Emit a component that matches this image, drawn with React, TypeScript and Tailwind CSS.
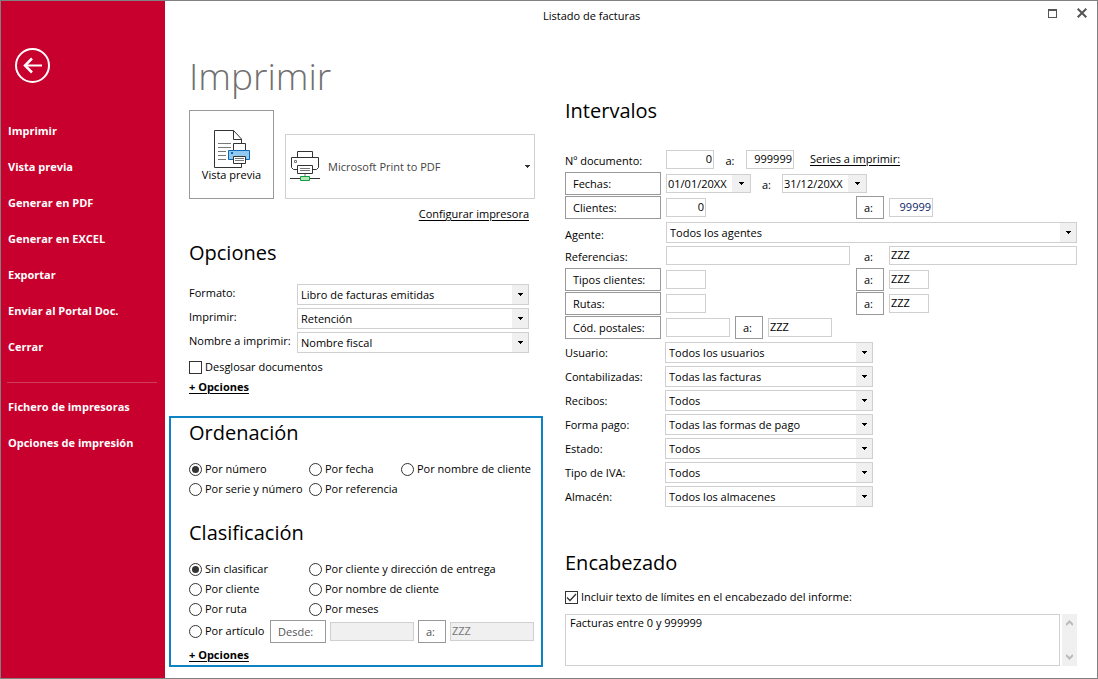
import React, { useState } from 'react';
import clsx from 'clsx';

const mainLinks = [
  'Imprimir',
  'Vista previa',
  'Generar en PDF',
  'Generar en EXCEL',
  'Exportar',
  'Enviar al Portal Doc.',
  'Cerrar',
];

const extraLinks = ['Fichero de impresoras', 'Opciones de impresión'];

const optionSelects = [
  { id: 'formato', label: 'Formato:', value: 'Libro de facturas emitidas' },
  { id: 'imprimir', label: 'Imprimir:', value: 'Retención' },
  { id: 'nombre', label: 'Nombre a imprimir:', value: 'Nombre fiscal' },
];

const filterSelects = [
  { id: 'usuario', label: 'Usuario:', value: 'Todos los usuarios' },
  { id: 'contabilizadas', label: 'Contabilizadas:', value: 'Todas las facturas' },
  { id: 'recibos', label: 'Recibos:', value: 'Todos' },
  { id: 'forma-pago', label: 'Forma pago:', value: 'Todas las formas de pago' },
  { id: 'estado', label: 'Estado:', value: 'Todos' },
  { id: 'tipo-iva', label: 'Tipo de IVA:', value: 'Todos' },
  { id: 'almacen', label: 'Almacén:', value: 'Todos los almacenes' },
];

interface SelectProps {
  id?: string;
  label?: string;
  value: string;
  className?: string;
  compact?: boolean;
}

function Select({ id, label, value, className, compact }: SelectProps) {
  return (
    <div className={clsx('relative border border-[#d0d0d0]', compact ? 'h-[19px]' : 'h-[21px]', className)}>
      <select
        id={id}
        aria-label={label}
        defaultValue={value}
        className={clsx(
          'block h-full w-full appearance-none bg-white leading-4 outline-none',
          compact ? 'pl-px' : 'pl-[3px]'
        )}
      >
        <option>{value}</option>
      </select>
      <span
        className={clsx(
          'pointer-events-none absolute inset-y-0 right-0 flex items-center justify-center bg-[#f0f0f0]',
          compact ? 'w-[18px]' : 'w-4'
        )}
      >
        <svg width="5" height="3" viewBox="0 0 5 3" shapeRendering="crispEdges">
          <path d="M0 0h5v1H4v1H3v1H2V2H1V1H0z" fill="#000" />
        </svg>
      </span>
    </div>
  );
}

interface FieldProps {
  label: string;
  value?: string;
  className?: string;
  alignRight?: boolean;
  disabled?: boolean;
}

function Field({ label, value = '', className, alignRight, disabled }: FieldProps) {
  return (
    <input
      type="text"
      aria-label={label}
      defaultValue={value}
      disabled={disabled}
      className={clsx(
        'mt-0.5 h-[19px] border border-[#d0d0d0] px-px pb-0.5 leading-4 outline-none disabled:bg-[#f0f0f0] disabled:text-[#777]',
        alignRight && 'text-right',
        className
      )}
    />
  );
}

function BoxButton({ children, className }: { children: React.ReactNode; className?: string }) {
  return (
    <button className={clsx('h-[23px] border border-[#999] text-left leading-[21px] hover:bg-gray-100', className)}>
      {children}
    </button>
  );
}

interface RadioProps {
  name: string;
  label: string;
  selected: string;
  onSelect: (value: string) => void;
}

function Radio({ name, label, selected, onSelect }: RadioProps) {
  return (
    <label className="flex h-5 items-center gap-[3px] whitespace-nowrap">
      <span className="relative size-[13px] shrink-0">
        <input
          type="radio"
          name={name}
          checked={selected === label}
          onChange={() => onSelect(label)}
          className="peer block size-[13px] appearance-none rounded-full border border-[#333] bg-white"
        />
        <span className="pointer-events-none absolute inset-[3px] hidden rounded-full bg-[#333] peer-checked:block" />
      </span>
      {label}
    </label>
  );
}

function Checkbox({ label, defaultChecked }: { label: string; defaultChecked?: boolean }) {
  return (
    <label className="flex h-5 items-center gap-[3px] whitespace-nowrap">
      <span className="relative size-[13px] shrink-0">
        <input
          type="checkbox"
          defaultChecked={defaultChecked}
          className="peer block size-[13px] appearance-none border border-[#333] bg-white"
        />
        <svg
          className="pointer-events-none absolute inset-0 hidden peer-checked:block"
          width="13"
          height="13"
          viewBox="0 0 13 13"
          fill="none"
          stroke="#333"
          strokeWidth="1.3"
        >
          <path d="M2 6.5L5 9.500l6-6.500" />
        </svg>
      </span>
      {label}
    </label>
  );
}

function PreviewIcon() {
  return (
    <svg width="36" height="38" viewBox="0 0 36 38" fill="none" stroke="#333">
      <path d="M27.5 33.500v4H.5V.5h19l8 8.500v4" fill="#fff" />
      <path d="M19.500.5v9h8" />
      <path d="M4 13.500h13M4 17.500h13M4 21.500h8M4 25.500h8M4 29.500h8" stroke="#777" />
      <path d="M19.500 20.500v-7h12v7" fill="#fff" />
      <path d="M14.500 20.500h21v9h-21z" fill="#92c9f0" stroke="#1067b5" />
      <path d="M17 23h2" stroke="#1067b5" strokeWidth="2" />
      <path d="M19.500 26.500h12v7h-12z" fill="#fff" />
      <path d="M21 28.500h9M21 30.500h9" stroke="#777" />
    </svg>
  );
}

function NetworkPrinterIcon() {
  return (
    <svg width="30" height="31" viewBox="0 0 30 31" fill="none" stroke="#333">
      <path d="M7.500 6.500v-6h15v6" fill="#fff" />
      <path d="M7.500 18.500h-4l-2-2v-10h27v10l-2 2h-4" />
      <path d="M4.500 9.500h2v2h-2z" stroke="#777" />
      <path d="M7.500 14.500h15v8h-15z" fill="#fff" />
      <path d="M10 17.500h10M10 19.500h10M15 23v3" stroke="#777" />
      <path d="M0 27.500h30" />
      <path d="M10.500 25.500h9v4h-9z" fill="#b5e6bd" stroke="#12a03c" />
    </svg>
  );
}

function SideLink({ children }: { children: React.ReactNode }) {
  return (
    <a href="#" className="flex h-9 items-center pl-[7px] whitespace-nowrap hover:bg-white/10">
      {children}
    </a>
  );
}

export default function App() {
  const [order, setOrder] = useState('Por número');
  const [group, setGroup] = useState('Sin clasificar');

  const orderProps = { name: 'ordenacion', selected: order, onSelect: setOrder };
  const groupProps = { name: 'clasificacion', selected: group, onSelect: setGroup };

  return (
    <div className="flex min-h-screen border border-[#808080] bg-white font-['Open_Sans','Noto_Sans',sans-serif] text-[11px] leading-4 text-black">
      <nav className="w-[164px] shrink-0 bg-[#c8002d] font-bold text-white">
        <button aria-label="Volver" className="mt-[47px] ml-3.5 block">
          <svg width="35" height="35" viewBox="0 0 35 35" fill="none" stroke="#fff" strokeWidth="2">
            <circle cx="17.500" cy="17.500" r="16.500" />
            <path d="M27 17.500H10" />
            <path d="M17 10.500l-7 7 7 7" strokeWidth="2.500" />
          </svg>
        </button>
        <div className="mt-[30px]">
          {mainLinks.map((link) => (
            <SideLink key={link}>{link}</SideLink>
          ))}
        </div>
        <hr className="mt-[17px] mr-2 ml-1.5 border-[#d23c5a]" />
        <div className="mt-1.5">
          {extraLinks.map((link) => (
            <SideLink key={link}>{link}</SideLink>
          ))}
        </div>
      </nav>

      <div className="flex min-w-0 grow flex-col">
        <header className="flex h-[30px] items-center pr-2.5">
          <span className="grow pl-[378px]">Listado de facturas</span>
          <button aria-label="Maximizar" className="mr-5 mb-1.5">
            <svg width="9" height="9" viewBox="0 0 9 9" fill="none" stroke="#555" shapeRendering="crispEdges">
              <path d="M.5.5h8v8h-8zM0 1.500h9" />
            </svg>
          </button>
          <button aria-label="Cerrar ventana" className="mb-1.5">
            <svg width="10" height="10" viewBox="0 0 10 10" stroke="#555" strokeWidth="2">
              <path d="M.7.7l8.600 8.600M9.300.7L.7 9.300" />
            </svg>
          </button>
        </header>

        <div className="flex">
          <div className="w-[378px] shrink-0">
            <div className="pr-2 pl-6">
              <h1 className="mt-[17px] text-[37px] leading-[56px] font-light text-[#707070]">Imprimir</h1>
              <div className="mt-1.5 flex items-end gap-[11px]">
                <button className="flex h-[89px] w-[85px] shrink-0 flex-col items-center border border-[#999] pt-[19px] hover:bg-gray-100">
                  <PreviewIcon />
                  <span className="-mt-px">Vista previa</span>
                </button>
                <button className="flex h-[65px] w-[250px] items-center border border-[#d0d0d0] pl-1 text-left text-[11px] text-[#444]">
                  <NetworkPrinterIcon />
                  <span className="grow pl-2">Microsoft Print to PDF</span>
                  <svg className="mr-1" width="5" height="3" viewBox="0 0 5 3" shapeRendering="crispEdges">
                    <path d="M0 0h5v1H4v1H3v1H2V2H1V1H0z" fill="#333" />
                  </svg>
                </button>
              </div>
              <div className="mt-[7px] pr-1.5 text-right">
                <a href="#" className="underline underline-offset-2">Configurar impresora</a>
              </div>

              <h2 className="mt-[17px] text-xl leading-7">Opciones</h2>
              <div className="mt-[17px] flex flex-col gap-[3px]">
                {optionSelects.map(({ id, label, value }) => (
                  <div key={id} className="flex">
                    <label htmlFor={id} className="w-[108px] shrink-0 leading-[18px] whitespace-nowrap">
                      {label}
                    </label>
                    <Select id={id} value={value} className="w-[232px]" />
                  </div>
                ))}
              </div>
              <div className="mt-1">
                <Checkbox label="Desglosar documentos" />
              </div>
              <a href="#" className="mt-0.5 inline-block font-bold underline underline-offset-2">+ Opciones</a>
            </div>

            <div className="mt-[21px] mb-2.5 ml-1 border-2 border-[#0d82c4] pb-0.5 pl-[18px]">
              <h2 className="mt-px text-xl leading-7">Ordenación</h2>
              <div className="mt-3 grid grid-cols-[120px_92px_auto]">
                <Radio label="Por número" {...orderProps} />
                <Radio label="Por fecha" {...orderProps} />
                <Radio label="Por nombre de cliente" {...orderProps} />
                <Radio label="Por serie y número" {...orderProps} />
                <Radio label="Por referencia" {...orderProps} />
              </div>

              <h2 className="mt-5 text-xl leading-7">Clasificación</h2>
              <div className="mt-3 grid grid-cols-[120px_auto]">
                <Radio label="Sin clasificar" {...groupProps} />
                <Radio label="Por cliente y dirección de entrega" {...groupProps} />
                <Radio label="Por cliente" {...groupProps} />
                <Radio label="Por nombre de cliente" {...groupProps} />
                <Radio label="Por ruta" {...groupProps} />
                <Radio label="Por meses" {...groupProps} />
              </div>
              <div className="mt-px flex gap-1">
                <div className="w-[77px] pt-px">
                  <Radio label="Por artículo" {...groupProps} />
                </div>
                <BoxButton className="w-14 pl-[7px] text-[#555]">Desde:</BoxButton>
                <Field label="Desde artículo" disabled className="w-[84px]" />
                <BoxButton className="w-7 pl-[7px] text-[#555]">a:</BoxButton>
                <Field label="Hasta artículo" value="ZZZ" disabled className="w-[84px]" />
              </div>
              <a href="#" className="mt-1 inline-block font-bold underline underline-offset-2">+ Opciones</a>
            </div>
          </div>

          <div className="min-w-0 grow pt-[66px] pr-5 pl-[22px]">
            <h2 className="text-xl leading-7">Intervalos</h2>
            <div className="mt-[23px] leading-[26px]">
              <div className="flex h-6">
                <span className="w-[101px]">Nº documento:</span>
                <Field label="Documento desde" value="0" alignRight className="w-12" />
                <span className="w-8 text-center">a:</span>
                <Field label="Documento hasta" value="999999" alignRight className="w-12" />
                <a href="#" className="ml-4 leading-[22px] underline underline-offset-2">Series a imprimir:</a>
              </div>
              <div className="flex h-6">
                <BoxButton className="mr-[5px] w-24 pl-[7px]">Fechas:</BoxButton>
                <Select label="Fecha desde" value="01/01/20XX" compact className="mt-0.5 w-[85px]" />
                <span className="w-[31px] text-center">a:</span>
                <Select label="Fecha hasta" value="31/12/20XX" compact className="mt-0.5 w-[85px]" />
              </div>
              <div className="flex h-6">
                <BoxButton className="mr-[5px] w-24 pl-[7px]">Clientes:</BoxButton>
                <Field label="Cliente desde" value="0" alignRight className="w-10" />
                <BoxButton className="mr-[5px] ml-[150px] w-7 pl-[7px]">a:</BoxButton>
                <Field label="Cliente hasta" value="99999" alignRight className="w-11 text-[#0a246a]" />
              </div>
              <div className="flex h-6">
                <label htmlFor="agente" className="w-[101px] shrink-0 leading-[30px]">Agente:</label>
                <Select id="agente" value="Todos los agentes" className="mt-0.5 grow" />
              </div>
              <div className="flex h-6">
                <span className="w-[101px] shrink-0">Referencias:</span>
                <Field label="Referencia desde" className="w-[184px]" />
                <span className="w-[39px] shrink-0 pl-3.5">a:</span>
                <Field label="Referencia hasta" value="ZZZ" className="min-w-0 grow" />
              </div>
              <div className="flex h-6">
                <BoxButton className="mr-[5px] w-24 pl-[7px]">Tipos clientes:</BoxButton>
                <Field label="Tipo de cliente desde" className="w-10" />
                <BoxButton className="mr-[5px] ml-[150px] w-7 pl-[7px]">a:</BoxButton>
                <Field label="Tipo de cliente hasta" value="ZZZ" className="w-10" />
              </div>
              <div className="flex h-6">
                <BoxButton className="mr-[5px] w-24 pl-[7px]">Rutas:</BoxButton>
                <Field label="Ruta desde" className="w-10" />
                <BoxButton className="mr-[5px] ml-[150px] w-7 pl-[7px]">a:</BoxButton>
                <Field label="Ruta hasta" value="ZZZ" className="w-10" />
              </div>
              <div className="flex h-6">
                <BoxButton className="mr-[5px] w-24 pl-[7px]">Cód. postales:</BoxButton>
                <Field label="Código postal desde" className="w-16" />
                <BoxButton className="mx-[5px] w-7 pl-[7px]">a:</BoxButton>
                <Field label="Código postal hasta" value="ZZZ" className="w-16" />
              </div>
              {filterSelects.map(({ id, label, value }) => (
                <div key={id} className="flex h-6">
                  <label htmlFor={id} className="w-[100px] shrink-0">{label}</label>
                  <Select id={id} value={value} className="mt-0.5 w-52" />
                </div>
              ))}
            </div>

            <h2 className="mt-[41px] text-xl leading-7">Encabezado</h2>
            <div className="mt-2.5">
              <Checkbox label="Incluir texto de límites en el encabezado del informe:" defaultChecked />
            </div>
            <div className="mt-[7px] flex gap-0.5">
              <textarea
                aria-label="Texto del encabezado"
                defaultValue="Facturas entre 0 y 999999"
                className="block h-[52px] min-w-0 grow resize-none border border-[#d0d0d0] px-1 leading-4 outline-none"
              />
              <div className="flex w-[15px] flex-col items-center justify-between bg-[#f0f0f0] py-1.5">
                <svg width="7" height="6" viewBox="0 0 7 6" fill="none" stroke="#bbb" strokeWidth="2">
                  <path d="M0 5l3.500-3.500L7 5" />
                </svg>
                <svg width="7" height="6" viewBox="0 0 7 6" fill="none" stroke="#bbb" strokeWidth="2">
                  <path d="M0 1l3.500 3.500L7 1" />
                </svg>
              </div>
            </div>
          </div>
        </div>
      </div>
    </div>
  );
}
